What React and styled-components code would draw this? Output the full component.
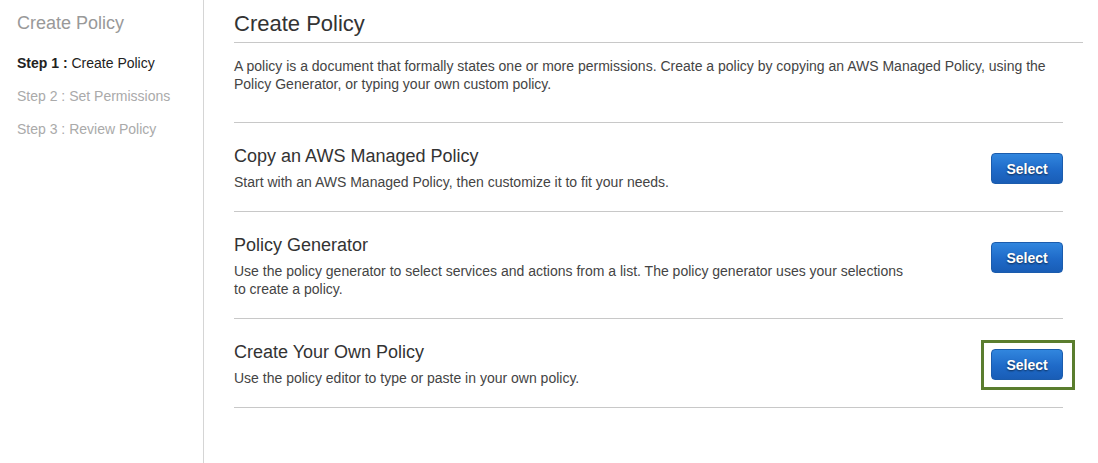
import React from "react";
import styled, { createGlobalStyle } from "styled-components";

const GlobalStyle = createGlobalStyle`
  html, body {
    margin: 0;
    padding: 0;
    background: #ffffff;
  }
  body {
    font-family: "Liberation Sans", Arial, Helvetica, sans-serif;
    color: #444;
  }
`;

const Page = styled.div`
  display: flex;
  width: 1098px;
  height: 463px;
  background: #fff;
  overflow: hidden;
`;

const Sidebar = styled.aside`
  width: 186px;
  flex-shrink: 0;
  padding: 12px 0 0 17px;
  border-right: 1px solid #d5d5d5;
`;

const SideTitle = styled.div`
  font-size: 18px;
  line-height: 22px;
  color: #999;
  margin-bottom: 13px;
`;

const StepList = styled.ul`
  list-style: none;
  margin: 0;
  padding: 0;
`;

const Step = styled.li`
  font-size: 14px;
  line-height: 33px;
  color: ${({ active }) => (active ? "#222" : "#aaa")};

  b {
    font-weight: bold;
  }
`;

const Main = styled.main`
  flex: 1;
  padding: 11px 15px 0 30px;
`;

const Title = styled.h1`
  margin: 0;
  font-size: 22px;
  font-weight: normal;
  line-height: 26px;
  color: #333;
  padding-bottom: 5px;
  border-bottom: 1px solid #c8c8c8;
`;

const Intro = styled.p`
  margin: 14px 20px 29px 0;
  font-size: 14px;
  line-height: 18px;
  color: #444;
`;

const Options = styled.div`
  margin-right: 20px;
  border-top: 1px solid #c8c8c8;
`;

const Option = styled.section`
  display: flex;
  justify-content: space-between;
  align-items: flex-start;
  padding: 22px 0 20px;
  border-bottom: 1px solid #c8c8c8;
`;

const OptionText = styled.div`
  max-width: 680px;
`;

const OptionTitle = styled.h2`
  margin: 0 0 6px;
  font-size: 18px;
  font-weight: normal;
  line-height: 22px;
  color: #333;
`;

const OptionDesc = styled.p`
  margin: 0;
  font-size: 14px;
  line-height: 18px;
  color: #444;
`;

const ButtonWrap = styled.div`
  position: relative;
  margin-top: 8px;
  flex-shrink: 0;
`;

const Highlight = styled.div`
  position: absolute;
  top: -9px;
  left: -10px;
  right: -12px;
  bottom: -10px;
  border: 3px solid #5a7d2e;
  pointer-events: none;
`;

const SelectButton = styled.button`
  display: block;
  width: 72px;
  height: 31px;
  padding: 0;
  border: 1px solid #1b5cad;
  border-radius: 4px;
  background: linear-gradient(to bottom, #3186de 0%, #1f6ac8 55%, #195db6 100%);
  color: #fff;
  font-family: "Liberation Sans", Arial, sans-serif;
  font-size: 14px;
  font-weight: bold;
  text-shadow: 0 1px 2px rgba(0, 0, 0, 0.6);
  cursor: pointer;
`;

const options = [
  {
    title: "Copy an AWS Managed Policy",
    desc: "Start with an AWS Managed Policy, then customize it to fit your needs.",
  },
  {
    title: "Policy Generator",
    desc:
      "Use the policy generator to select services and actions from a list. The policy generator uses your selections to create a policy.",
  },
  {
    title: "Create Your Own Policy",
    desc: "Use the policy editor to type or paste in your own policy.",
    highlighted: true,
  },
];

export default function App() {
  return (
    <>
      <GlobalStyle />
      <Page>
        <Sidebar>
          <SideTitle>Create Policy</SideTitle>
          <StepList>
            <Step active>
              <b>Step 1 :</b> Create Policy
            </Step>
            <Step>Step 2 : Set Permissions</Step>
            <Step>Step 3 : Review Policy</Step>
          </StepList>
        </Sidebar>
        <Main>
          <Title>Create Policy</Title>
          <Intro>
            A policy is a document that formally states one or more permissions. Create a policy by
            copying an AWS Managed Policy, using the Policy Generator, or typing your own custom
            policy.
          </Intro>
          <Options>
            {options.map((item, index) => (
              <Option key={index}>
                <OptionText>
                  <OptionTitle>{item.title}</OptionTitle>
                  <OptionDesc>{item.desc}</OptionDesc>
                </OptionText>
                <ButtonWrap>
                  {item.highlighted ? <Highlight /> : null}
                  <SelectButton>Select</SelectButton>
                </ButtonWrap>
              </Option>
            ))}
          </Options>
        </Main>
      </Page>
    </>
  );
}
